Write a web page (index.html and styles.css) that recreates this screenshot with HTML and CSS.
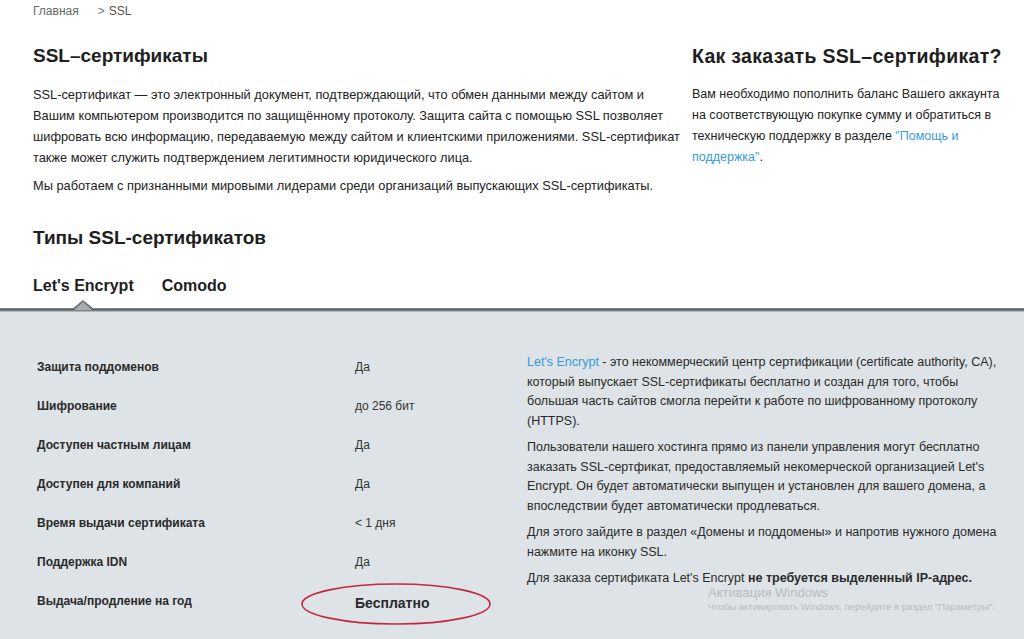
FILE: index.html
```html
<!DOCTYPE html>
<html lang="ru">
<head>
<meta charset="utf-8">
<title>SSL-сертификаты</title>
<link rel="stylesheet" href="styles.css">
</head>
<body>
<nav class="crumbs"><span class="crumb-home">Главная</span><span class="crumb-sep">&gt;</span><span class="crumb-cur">SSL</span></nav>

<section class="intro">
  <div class="intro-main">
    <h1 class="title">SSL–сертификаты</h1>
    <p class="text">SSL-сертификат — это электронный документ, подтверждающий, что обмен данными между сайтом и<br>Вашим компьютером производится по защищённому протоколу. Защита сайта с помощью SSL позволяет<br>шифровать всю информацию, передаваемую между сайтом и клиентскими приложениями. SSL-сертификат<br>также может служить подтверждением легитимности юридического лица.</p>
    <p class="text">Мы работаем с признанными мировыми лидерами среди организаций выпускающих SSL-сертификаты.</p>
  </div>
  <aside class="intro-side">
    <h2 class="title">Как заказать SSL–сертификат?</h2>
    <p class="text">Вам необходимо пополнить баланс Вашего аккаунта<br>на соответствующую покупке сумму и обратиться в<br>техническую поддержку в разделе <a class="link" href="#">"Помощь и<br>поддержка"</a>.</p>
  </aside>
</section>

<h2 class="title types">Типы SSL-сертификатов</h2>
<div class="tabs">
  <span class="tab active">Let's Encrypt</span>
  <span class="tab">Comodo</span>
</div>

<section class="panel">
  <div class="panel-shadow"><span class="pointer"></span></div>
  <div class="panel-body">
    <div class="specs">
      <div class="row"><span class="key">Защита поддоменов</span><span class="val">Да</span></div>
      <div class="row"><span class="key">Шифрование</span><span class="val">до 256 бит</span></div>
      <div class="row"><span class="key">Доступен частным лицам</span><span class="val">Да</span></div>
      <div class="row"><span class="key">Доступен для компаний</span><span class="val">Да</span></div>
      <div class="row"><span class="key">Время выдачи сертификата</span><span class="val">&lt; 1 дня</span></div>
      <div class="row"><span class="key">Поддержка IDN</span><span class="val">Да</span></div>
      <div class="row"><span class="key">Выдача/продление на год</span><span class="val price">Бесплатно
        <svg class="ring" viewBox="0 0 192 44" width="192" height="44"><ellipse cx="96" cy="22" rx="94" ry="20" fill="none" stroke="#c42a3e" stroke-width="1.6"/></svg></span></div>
    </div>
    <div class="about">
      <p><a class="link" href="#">Let's Encrypt</a> - это некоммерческий центр сертификации (certificate authority, CA),<br>который выпускает SSL-сертификаты бесплатно и создан для того, чтобы<br>большая часть сайтов смогла перейти к работе по шифрованному протоколу<br>(HTTPS).</p>
      <p>Пользователи нашего хостинга прямо из панели управления могут бесплатно<br>заказать SSL-сертфикат, предоставляемый некомерческой организацией Let's<br>Encrypt. Он будет автоматически выпущен и установлен для вашего домена, а<br>впоследствии будет автоматически продлеваться.</p>
      <p>Для этого зайдите в раздел «Домены и поддомены» и напротив нужного домена<br>нажмите на иконку SSL.</p>
      <p>Для заказа сертификата Let's Encrypt <b>не требуется выделенный IP-адрес.</b></p>
    </div>
  </div>
  <div class="watermark">
    <div class="wm-title">Активация Windows</div>
    <div class="wm-sub">Чтобы активировать Windows, перейдите в раздел "Параметры".</div>
  </div>
</section>
</body>
</html>
```

FILE: styles.css
```css
html, body {
  margin: 0;
  padding: 0;
  background: #ffffff;
  font-family: "Liberation Sans", Arial, sans-serif;
  color: #222;
}
body {
  width: 1024px;
  height: 639px;
  overflow: hidden;
  display: flex;
  flex-direction: column;
}
.crumbs {
  padding: 3px 0 0 33px;
  font-size: 12px;
  line-height: 16px;
  color: #666;
  display: flex;
}
.crumb-sep { color: #777; margin: 0 4px 0 19px; }
.crumb-cur { color: #555; }

.intro {
  display: flex;
  padding: 25px 0 0 33px;
}
.intro-main { width: 659px; }
.intro-side { width: 330px; }
.title {
  margin: 0;
  font-size: 19px;
  line-height: 24px;
  font-weight: bold;
  color: #1e1e1e;
}
.intro-side .title { font-size: 19.5px; letter-spacing: 0.3px; }
.text {
  margin: 0;
  font-size: 12.5px;
  line-height: 21px;
  color: #222;
}
.intro-main .text { font-size: 12.8px; }
.intro-main .title, .intro-side .title { margin-bottom: 16px; }
.intro-main .text + .text { margin-top: 7px; }
.link { color: #3a9ad6; text-decoration: none; }

.types { margin: 30px 0 0 33px; }
.tabs {
  display: flex;
  gap: 28px;
  padding: 27px 0 0 33px;
  height: 52px;
  box-sizing: border-box;
  font-size: 16px;
  font-weight: bold;
  color: #1e1e1e;
}

.panel {
  position: relative;
  flex: 1;
  margin-top: 6px;
  background: #dde3e6;
  display: flex;
  flex-direction: column;
}
.panel-shadow {
  position: relative;
  height: 4px;
  background: linear-gradient(#9a9fa3, #55595c 40%, #8d9296 70%, #c7ccd0);
}
.pointer {
  position: absolute;
  left: 72px;
  top: -8px;
  width: 0;
  height: 0;
  border-left: 11px solid transparent;
  border-right: 11px solid transparent;
  border-bottom: 9px solid #6f7478;
}
.pointer::after {
  content: "";
  position: absolute;
  left: -9px;
  top: 2px;
  border-left: 9px solid transparent;
  border-right: 9px solid transparent;
  border-bottom: 8px solid #a8adb1;
}

.panel-body {
  display: flex;
  padding: 47px 0 0 37px;
}
.specs {
  width: 490px;
  display: flex;
  flex-direction: column;
  gap: 22px;
}
.row {
  display: flex;
  font-size: 12px;
  line-height: 17px;
}
.key {
  width: 318px;
  font-weight: bold;
  color: #2a2a2a;
}
.val { color: #333; }
.price {
  position: relative;
  font-weight: bold;
  font-size: 14px;
  color: #2a2a2a;
  margin-top: 2px;
}
.ring {
  position: absolute;
  left: -55px;
  top: -13px;
}
.about {
  width: 480px;
  font-size: 12.5px;
  line-height: 19.5px;
  color: #2a2a2a;
  margin-top: -6px;
}
.about p { margin: 0 0 7px 0; }

.watermark {
  position: absolute;
  left: 708px;
  top: 277px;
  color: #b7bdc1;
}
.wm-title { font-size: 13px; line-height: 15px; }
.wm-sub { font-size: 9.5px; line-height: 14px; }
```
